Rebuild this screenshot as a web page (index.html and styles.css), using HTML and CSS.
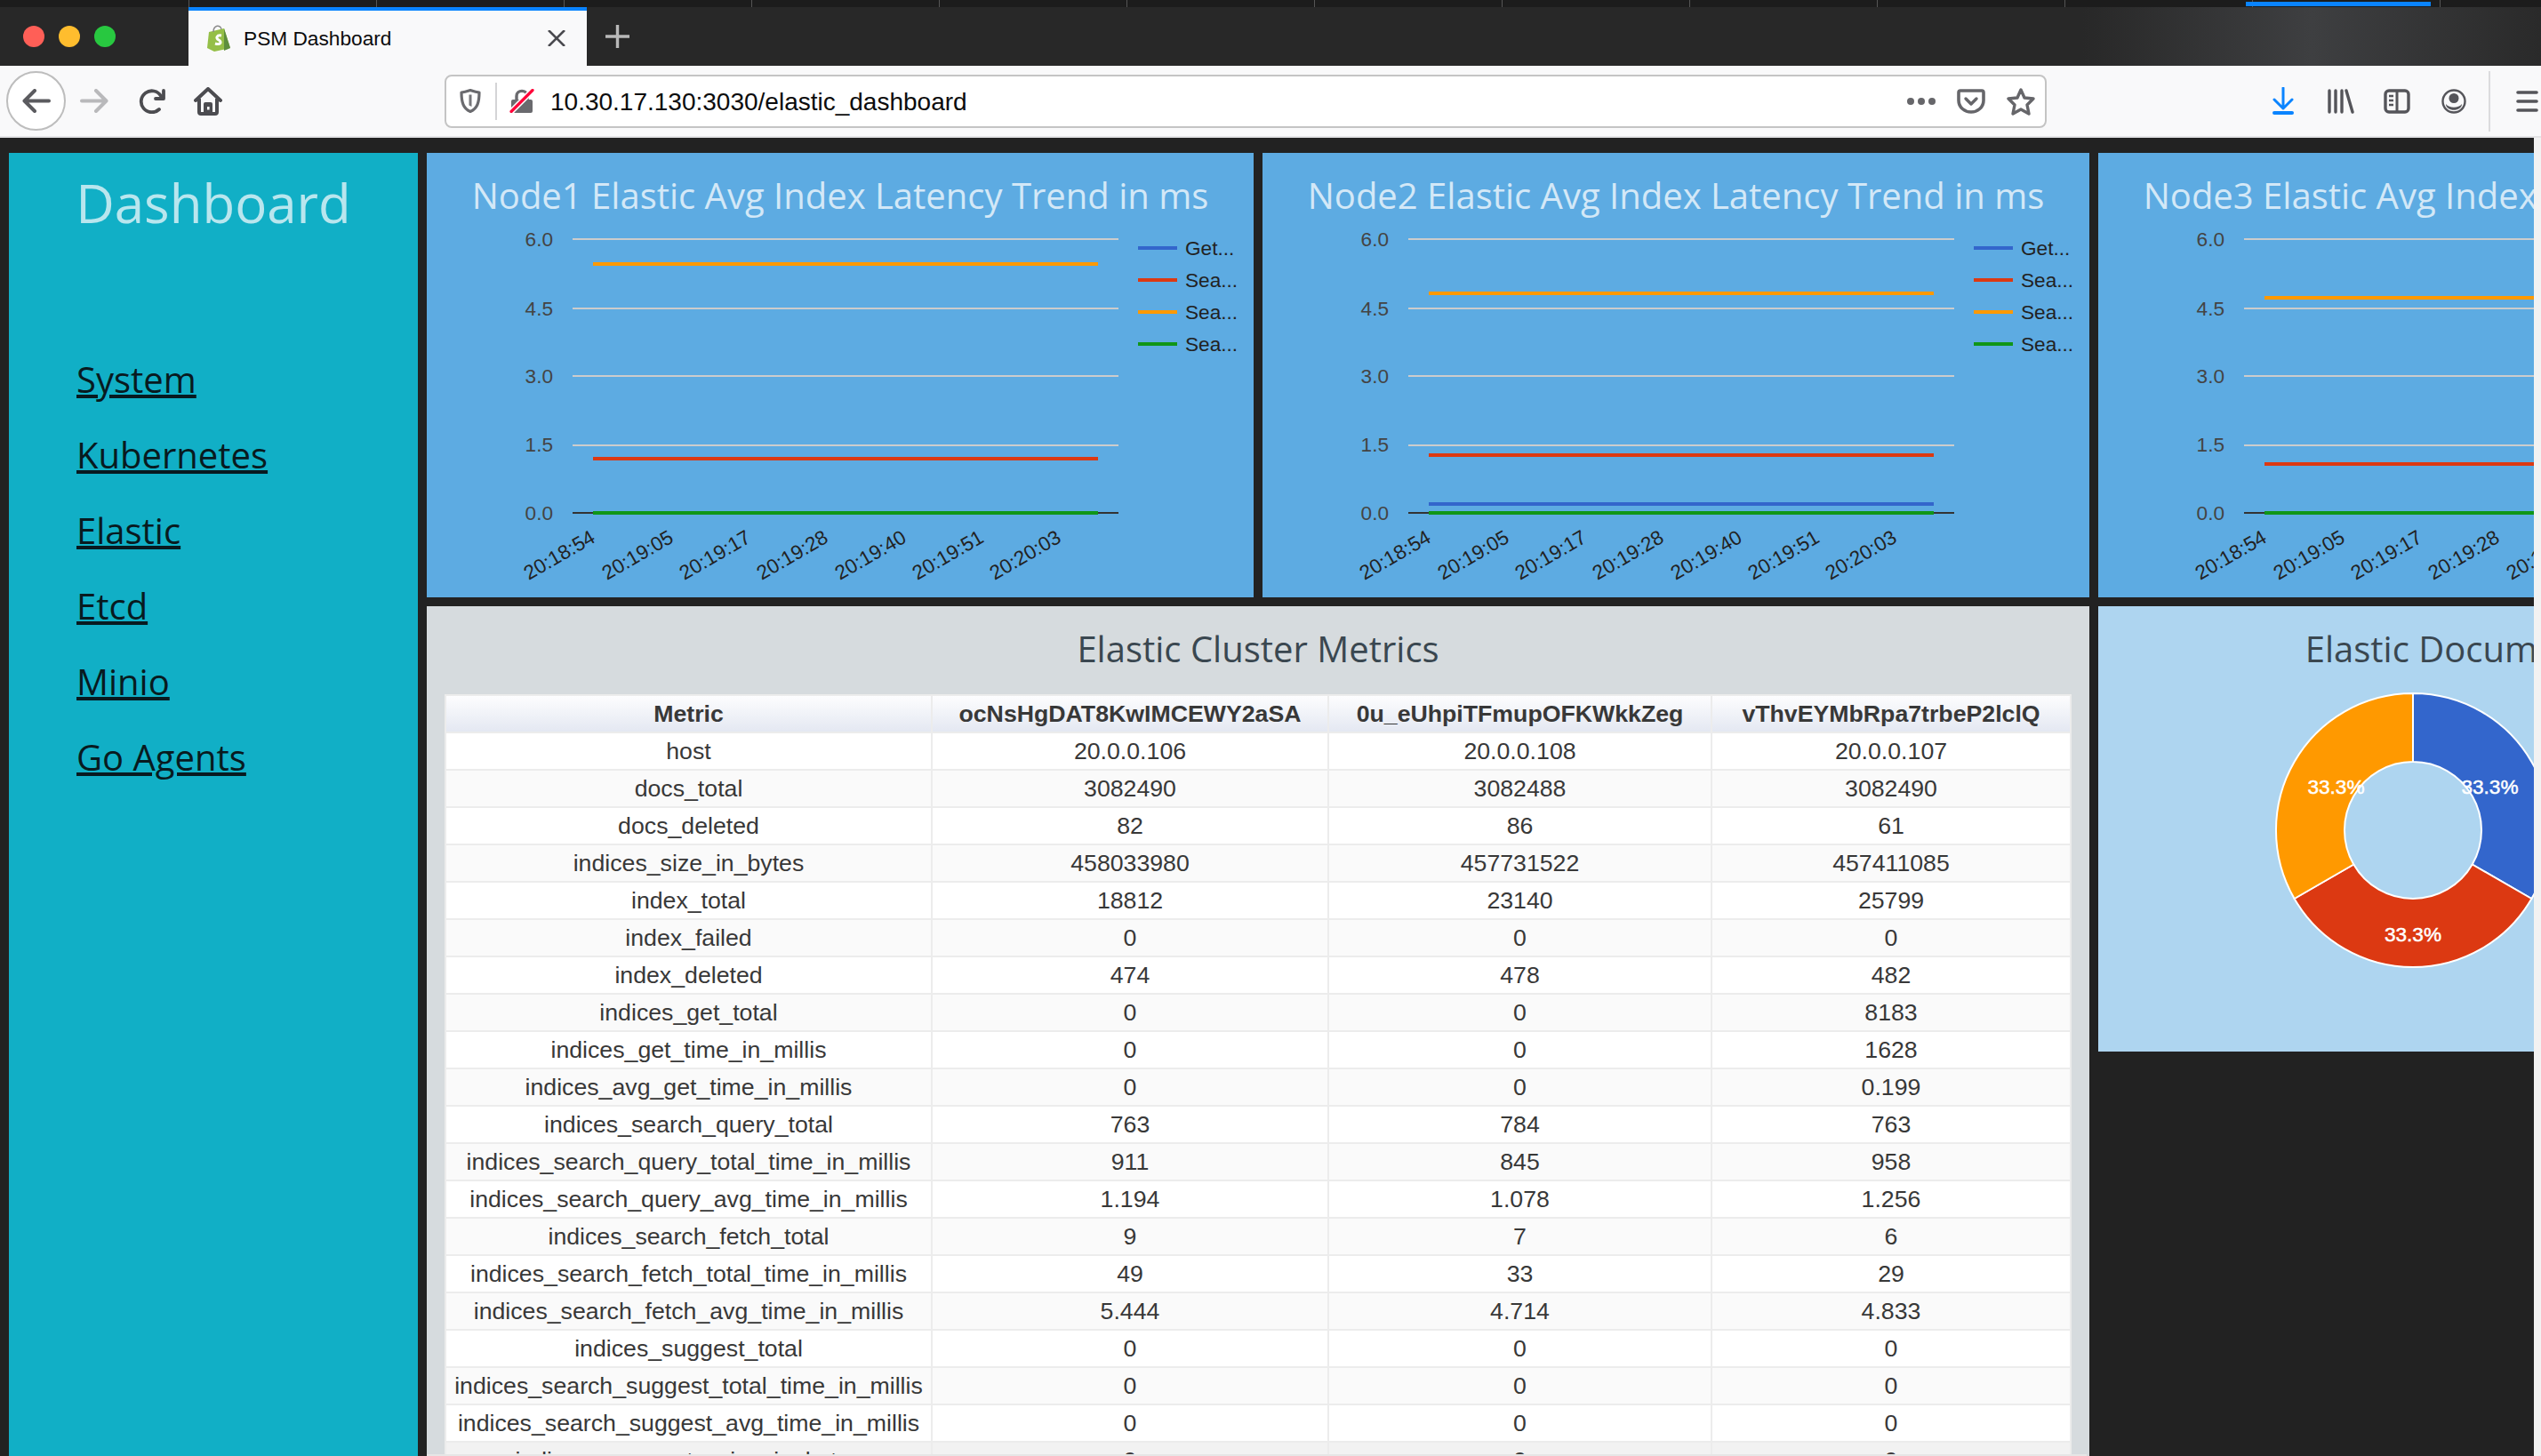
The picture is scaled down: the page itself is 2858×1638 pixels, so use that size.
FILE: index.html
```html
<!DOCTYPE html>
<html lang="en">

<head>
    <meta charset="UTF-8">
    <title>PSM Dashboard</title>
    <link rel="stylesheet" href="styles.css">
</head>

<body>
    <div class="window-strip"><span class="other-tab"></span></div>
    <div class="tabbar">
        <div class="traffic">
            <span class="light red"></span>
            <span class="light yellow"></span>
            <span class="light green"></span>
        </div>
        <div class="tab">
            <svg class="favicon" viewBox="0 0 28 30" width="28" height="30">
                <path d="M3 8 L20 4 L27 26 L9 30 L1 26 Z" fill="#95bf47" />
                <path d="M20 4 L27 26 L20 29 Z" fill="#5e8e3e" />
                <path d="M8 8 C8 0 16 -1 17 5" fill="none" stroke="#8a8a8a" stroke-width="1.5" />
                <path d="M17 12 C12 11 10 15 14 17 C18 19 16 23 10 21" fill="none" stroke="#fff" stroke-width="3" />
            </svg>
            <span class="tab-title">PSM Dashboard</span>
            <svg class="tab-close" viewBox="0 0 20 18" width="20" height="18">
                <path d="M1 0 L19 18 M19 0 L1 18" stroke="#4a4a4f" stroke-width="2.6" />
            </svg>
        </div>
        <svg class="newtab" viewBox="0 0 27 26" width="27" height="26">
            <path d="M13.5 0 V26 M0 13 H27" stroke="#b8b8b8" stroke-width="3.4" />
        </svg>
        <div class="tab-glow"></div>
    </div>

    <div class="toolbar">
        <div class="back-btn">
            <svg viewBox="0 0 32 27" width="32" height="27">
                <path d="M30 13.5 H3 M14 2 L2.5 13.5 L14 25" fill="none" stroke="#5b5b5f" stroke-width="4" stroke-linecap="round" stroke-linejoin="round" />
            </svg>
        </div>
        <svg class="tool-icon forward" viewBox="0 0 32 27" width="32" height="27">
            <path d="M2 13.5 H29 M18 2 L29.5 13.5 L18 25" fill="none" stroke="#b9b9bb" stroke-width="4" stroke-linecap="round" stroke-linejoin="round" />
        </svg>
        <svg class="tool-icon reload" viewBox="0 0 30 28" width="30" height="28">
            <path d="M23 23 A12 12 0 1 1 25 8" fill="none" stroke="#4c4c50" stroke-width="3.8" stroke-linecap="round" />
            <path d="M28 2 V11 H19" fill="none" stroke="#4c4c50" stroke-width="3.8" stroke-linecap="round" stroke-linejoin="round" />
        </svg>
        <svg class="tool-icon home" viewBox="0 0 32 32" width="32" height="32">
            <path d="M2 15 L16 2 L30 15" fill="none" stroke="#4c4c50" stroke-width="4" stroke-linecap="round" stroke-linejoin="round" />
            <path d="M6 13 V28 Q6 30 8 30 H24 Q26 30 26 28 V13" fill="none" stroke="#4c4c50" stroke-width="4" />
            <path d="M11 30 V19 Q11 17 13 17 H19 Q21 17 21 19 V30 Z" fill="#4c4c50" />
            <rect x="15" y="22" width="2.6" height="3.5" fill="#f9f9fa" />
        </svg>

        <div class="urlbar">
            <svg class="shield" viewBox="0 0 24 27" width="24" height="27">
                <path d="M2 4 C7 3.5 9 2.5 12 1.5 C15 2.5 17 3.5 22 4 C22 15 20 22 12 25.5 C4 22 2 15 2 4 Z" fill="#fff" stroke="#6a6a6e" stroke-width="3.2" stroke-linejoin="round" />
                <path d="M10.5 6.5 H13.5 V20 L10.5 18.5 Z" fill="#77777b" />
            </svg>
            <span class="url-sep"></span>
            <svg class="lock" viewBox="0 0 28 27" width="28" height="27">
                <path d="M8 13 V8 C8 0.5 20 0.5 20 8 V13" fill="none" stroke="#6a6a6e" stroke-width="3.4" />
                <rect x="2" y="12" width="24" height="15" rx="2" fill="#6a6a6e" />
                <path d="M2 25.5 L26 1.5" stroke="#fff" stroke-width="6.5" />
                <path d="M2 25.5 L26 1.5" stroke="#ff0039" stroke-width="3.2" stroke-linecap="round" />
            </svg>
            <span class="url-text">10.30.17.130:3030/elastic_dashboard</span>
            <span class="url-dots"><i></i><i></i><i></i></span>
            <svg class="pocket" viewBox="0 0 32 28" width="32" height="28">
                <path d="M2 4 Q2 2 4 2 H28 Q30 2 30 4 V13 C30 21 23 26 16 26 C9 26 2 21 2 13 Z" fill="none" stroke="#66666a" stroke-width="3.6" stroke-linejoin="round" />
                <path d="M10 11 L16 17 L22 11" fill="none" stroke="#66666a" stroke-width="3.4" stroke-linecap="round" stroke-linejoin="round" />
            </svg>
            <svg class="star" viewBox="0 0 32 32" width="32" height="32">
                <path d="M16 3 L20 12 L30 13 L23 20 L25 30 L16 25 L7 30 L9 20 L2 13 L12 12 Z" fill="none" stroke="#66666a" stroke-width="3.4" stroke-linejoin="round" />
            </svg>
        </div>

        <svg class="tool-download" viewBox="0 0 24 31" width="24" height="31">
            <path d="M12 1 V24 M2 14 L12 24 L22 14" fill="none" stroke="#0a84ff" stroke-width="3" stroke-linecap="round" stroke-linejoin="round" />
            <path d="M2 29 H22" stroke="#0a84ff" stroke-width="4" stroke-linecap="round" />
        </svg>
        <svg class="tool-library" viewBox="0 0 30 28" width="30" height="28">
            <path d="M2 2 V26 M9 2 V26 M16 2 V26 M21 2 L28 26" fill="none" stroke="#55555a" stroke-width="3.4" stroke-linecap="round" />
        </svg>
        <svg class="tool-sidebar" viewBox="0 0 30 28" width="30" height="28">
            <rect x="2" y="2" width="26" height="24" rx="4" fill="none" stroke="#55555a" stroke-width="3.4" />
            <path d="M15 2 V26" stroke="#55555a" stroke-width="3" />
            <path d="M6 8 H11 M6 13 H11 M6 18 H11" stroke="#55555a" stroke-width="2.4" />
        </svg>
        <svg class="tool-account" viewBox="0 0 28 28" width="28" height="28">
            <circle cx="14" cy="14" r="12.5" fill="none" stroke="#55555a" stroke-width="2.4" />
            <circle cx="14" cy="10.5" r="5.5" fill="#55555a" />
            <path d="M5 17 C9 22 19 22 23 17 C23 26 5 26 5 17 Z" fill="#55555a" />
        </svg>
        <span class="tool-sep"></span>
        <svg class="hamburger" viewBox="0 0 25 24" width="25" height="24">
            <path d="M2 2 H23 M2 12 H23 M2 22 H23" stroke="#55555a" stroke-width="3.6" stroke-linecap="round" />
        </svg>
    </div>

    <div class="viewport">
        <div class="dashboard">
            <nav class="sidenav">
                <h1 class="brand">Dashboard</h1>
                <ul class="nav-links">
                    <li><a href="#">System</a></li>
                    <li><a href="#">Kubernetes</a></li>
                    <li><a href="#">Elastic</a></li>
                    <li><a href="#">Etcd</a></li>
                    <li><a href="#">Minio</a></li>
                    <li><a href="#">Go Agents</a></li>
                </ul>
            </nav>

            <section class="panel chart-panel">
                <h2 class="panel-title light-title">Node1 Elastic Avg Index Latency Trend in ms</h2>
                <svg class="line-chart" viewBox="0 17 930 424" width="930" height="424">
                    <use href="#chart-axes" />
                    <path class="series orange" d="M187 66 H755" />
                    <path class="series red" d="M187 285 H755" />
                    <path class="series blue" d="M187 346 H755" />
                    <path class="series green" d="M187 346 H755" />
                </svg>
            </section>

            <section class="panel chart-panel">
                <h2 class="panel-title light-title">Node2 Elastic Avg Index Latency Trend in ms</h2>
                <svg class="line-chart" viewBox="0 17 930 424" width="930" height="424">
                    <use href="#chart-axes" />
                    <path class="series orange" d="M187 99 H755" />
                    <path class="series red" d="M187 281 H755" />
                    <path class="series blue" d="M187 336 H755" />
                    <path class="series green" d="M187 346 H755" />
                </svg>
            </section>

            <section class="panel chart-panel">
                <h2 class="panel-title light-title">Node3 Elastic Avg Index Latency Trend in ms</h2>
                <svg class="line-chart" viewBox="0 17 930 424" width="930" height="424">
                    <use href="#chart-axes" />
                    <path class="series orange" d="M187 104 H755" />
                    <path class="series red" d="M187 291 H755" />
                    <path class="series blue" d="M187 346 H755" />
                    <path class="series green" d="M187 346 H755" />
                </svg>
            </section>

            <section class="panel metrics-panel">
                <h2 class="panel-title dark-title">Elastic Cluster Metrics</h2>
                <table class="metrics">
                    <thead>
                        <tr>
                            <th class="col-metric">Metric</th>
                            <th class="col-a">ocNsHgDAT8KwIMCEWY2aSA</th>
                            <th class="col-b">0u_eUhpiTFmupOFKWkkZeg</th>
                            <th class="col-c">vThvEYMbRpa7trbeP2lclQ</th>
                        </tr>
                    </thead>
                    <tbody>
                        <tr><td>host</td><td>20.0.0.106</td><td>20.0.0.108</td><td>20.0.0.107</td></tr>
                        <tr><td>docs_total</td><td>3082490</td><td>3082488</td><td>3082490</td></tr>
                        <tr><td>docs_deleted</td><td>82</td><td>86</td><td>61</td></tr>
                        <tr><td>indices_size_in_bytes</td><td>458033980</td><td>457731522</td><td>457411085</td></tr>
                        <tr><td>index_total</td><td>18812</td><td>23140</td><td>25799</td></tr>
                        <tr><td>index_failed</td><td>0</td><td>0</td><td>0</td></tr>
                        <tr><td>index_deleted</td><td>474</td><td>478</td><td>482</td></tr>
                        <tr><td>indices_get_total</td><td>0</td><td>0</td><td>8183</td></tr>
                        <tr><td>indices_get_time_in_millis</td><td>0</td><td>0</td><td>1628</td></tr>
                        <tr><td>indices_avg_get_time_in_millis</td><td>0</td><td>0</td><td>0.199</td></tr>
                        <tr><td>indices_search_query_total</td><td>763</td><td>784</td><td>763</td></tr>
                        <tr><td>indices_search_query_total_time_in_millis</td><td>911</td><td>845</td><td>958</td></tr>
                        <tr><td>indices_search_query_avg_time_in_millis</td><td>1.194</td><td>1.078</td><td>1.256</td></tr>
                        <tr><td>indices_search_fetch_total</td><td>9</td><td>7</td><td>6</td></tr>
                        <tr><td>indices_search_fetch_total_time_in_millis</td><td>49</td><td>33</td><td>29</td></tr>
                        <tr><td>indices_search_fetch_avg_time_in_millis</td><td>5.444</td><td>4.714</td><td>4.833</td></tr>
                        <tr><td>indices_suggest_total</td><td>0</td><td>0</td><td>0</td></tr>
                        <tr><td>indices_search_suggest_total_time_in_millis</td><td>0</td><td>0</td><td>0</td></tr>
                        <tr><td>indices_search_suggest_avg_time_in_millis</td><td>0</td><td>0</td><td>0</td></tr>
                        <tr><td>indices_segments_size_in_bytes</td><td>0</td><td>0</td><td>0</td></tr>
                    </tbody>
                </table>
            </section>

            <section class="panel docs-panel">
                <h2 class="panel-title dark-title">Elastic Document Counts</h2>
                <svg class="donut" viewBox="0 70 500 420" width="500" height="420">
                    <path class="slice-blue" d="M354 92 A154 154 0 0 1 487.4 323 L420.7 284.5 A77 77 0 0 0 354 169 Z" />
                    <path class="slice-red" d="M487.4 323 A154 154 0 0 1 220.6 323 L287.3 284.5 A77 77 0 0 0 420.7 284.5 Z" />
                    <path class="slice-orange" d="M220.6 323 A154 154 0 0 1 354 92 L354 169 A77 77 0 0 0 287.3 284.5 Z" />
                    <text class="donut-label" x="267.5" y="205">33.3%</text>
                    <text class="donut-label" x="440.5" y="205">33.3%</text>
                    <text class="donut-label" x="354" y="371">33.3%</text>
                </svg>
            </section>
        </div>
        <div class="scroll-strip"></div>
    </div>

    <svg class="defs" width="0" height="0">
        <defs>
            <g id="chart-axes">
                <path class="grid" d="M164 38 H778 M164 116 H778 M164 192 H778 M164 270 H778" />
                <path class="baseline" d="M164 346 H778" />
                <text class="axis-y" x="142" y="46">6.0</text>
                <text class="axis-y" x="142" y="124">4.5</text>
                <text class="axis-y" x="142" y="200">3.0</text>
                <text class="axis-y" x="142" y="277">1.5</text>
                <text class="axis-y" x="142" y="354">0.0</text>
                <text class="axis-x" transform="translate(191 378) rotate(-30)">20:18:54</text>
                <text class="axis-x" transform="translate(279 378) rotate(-30)">20:19:05</text>
                <text class="axis-x" transform="translate(366 378) rotate(-30)">20:19:17</text>
                <text class="axis-x" transform="translate(453 378) rotate(-30)">20:19:28</text>
                <text class="axis-x" transform="translate(541 378) rotate(-30)">20:19:40</text>
                <text class="axis-x" transform="translate(628 378) rotate(-30)">20:19:51</text>
                <text class="axis-x" transform="translate(715 378) rotate(-30)">20:20:03</text>
                <path class="legend-blue" d="M800 48 H844" />
                <path class="legend-red" d="M800 84 H844" />
                <path class="legend-orange" d="M800 120 H844" />
                <path class="legend-green" d="M800 156 H844" />
                <text class="legend-text" x="853" y="56">Get...</text>
                <text class="legend-text" x="853" y="92">Sea...</text>
                <text class="legend-text" x="853" y="128">Sea...</text>
                <text class="legend-text" x="853" y="164">Sea...</text>
            </g>
        </defs>
    </svg>
</body>

</html>
```

FILE: styles.css
```css
html,
body {
    margin: 0;
    padding: 0;
    height: 100%;
    overflow: hidden;
}

body {
    font-family: "Liberation Sans", Arial, sans-serif;
    background-color: #222;
    display: flex;
    flex-direction: column;
}

.defs {
    position: absolute;
}

/* browser chrome */
.window-strip {
    height: 8px;
    flex: none;
    background-color: #1c1c1c;
    background-image: repeating-linear-gradient(to right, transparent 0, transparent 210px, #555 210px, #555 211px);
    background-position: 2px 0;
}

.other-tab {
    display: block;
    width: 208px;
    height: 5px;
    margin: 2px 0 0 2526px;
    background-color: #0a84ff;
}

.tabbar {
    height: 66px;
    flex: none;
    display: flex;
    align-items: center;
    background-color: #282828;
}

.traffic {
    width: 212px;
    box-sizing: border-box;
    padding-left: 26px;
    display: flex;
    align-items: center;
    gap: 16px;
    flex: none;
}

.light {
    width: 24px;
    height: 24px;
    border-radius: 50%;
}

.light.red {
    background-color: #ff5f57;
}

.light.yellow {
    background-color: #ffbd2e;
}

.light.green {
    background-color: #28c840;
}

.tab {
    width: 448px;
    height: 66px;
    box-sizing: border-box;
    flex: none;
    display: flex;
    align-items: center;
    background-color: #f9f9fa;
    border-top: 4px solid #0a84ff;
    padding: 0 24px 0 20px;
}

.favicon {
    flex: none;
}

.tab-title {
    margin-left: 14px;
    font-size: 22.7px;
    color: #0c0c0d;
    flex: 1;
}

.newtab {
    flex: none;
    margin-left: 21px;
}

.tab-glow {
    flex: 1;
    align-self: stretch;
    background: linear-gradient(to right, #282828 0, #282828 76%, #3e3f41 88%, #2a2a2a 100%);
}

.toolbar {
    height: 81px;
    flex: none;
    box-sizing: border-box;
    display: flex;
    align-items: center;
    background-color: #f9f9fa;
    border-bottom: 2px solid #e4e4e6;
    padding-left: 7px;
}

.back-btn {
    width: 67px;
    height: 67px;
    box-sizing: border-box;
    border: 2px solid #bdbdbd;
    border-radius: 50%;
    background-color: #fff;
    display: flex;
    align-items: center;
    justify-content: center;
    flex: none;
}

.tool-icon {
    flex: none;
}

.tool-icon.forward {
    margin-left: 16px;
}

.tool-icon.reload {
    margin-left: 34px;
}

.tool-icon.home {
    margin-left: 32px;
}

.urlbar {
    width: 1802px;
    height: 60px;
    margin-left: 250px;
    box-sizing: border-box;
    border: 2px solid #c4c4c4;
    border-radius: 8px;
    background-color: #fff;
    display: flex;
    align-items: center;
    flex: none;
    padding: 0 11px 0 15px;
}

.shield,
.lock,
.pocket,
.star {
    flex: none;
}

.url-sep {
    width: 2px;
    height: 42px;
    background-color: #d4d4d6;
    margin: 0 14px 0 16px;
    flex: none;
}

.url-text {
    margin-left: 18px;
    padding-top: 2px;
    font-size: 28px;
    color: #0c0c0d;
    flex: 1;
}

.url-dots {
    display: flex;
    gap: 4px;
}

.url-dots i {
    width: 8px;
    height: 8px;
    border-radius: 50%;
    background-color: #66666a;
}

.pocket {
    margin-left: 24px;
}

.star {
    margin-left: 24px;
}

.tool-download {
    flex: none;
    margin-left: 254px;
}

.tool-library {
    flex: none;
    margin-left: 38px;
}

.tool-sidebar {
    flex: none;
    margin-left: 33px;
}

.tool-account {
    flex: none;
    margin-left: 35px;
}

.tool-sep {
    width: 2px;
    height: 68px;
    flex: none;
    margin-left: 25px;
    background-color: #dcdcde;
}

.hamburger {
    flex: none;
    margin-left: 29px;
}

/* page */
.viewport {
    flex: 1;
    min-height: 0;
    display: flex;
    overflow: hidden;
}

.dashboard {
    flex: 1;
    min-width: 0;
    overflow: hidden;
    display: grid;
    grid-template-columns: 460px 930px 930px 930px;
    grid-template-rows: 500px 1fr;
    gap: 10px;
    padding: 17px 0 0 10px;
    background-color: #222;
}

.scroll-strip {
    width: 8px;
    flex: none;
    background-color: #f2f2f2;
}

.sidenav {
    grid-row: 1 / 3;
    background-color: #11afc6;
}

.brand {
    margin: 0;
    padding-top: 15px;
    text-align: center;
    font-family: "Open Sans", sans-serif;
    font-weight: 400;
    font-size: 60px;
    color: #b9e6ee;
}

.nav-links {
    list-style: none;
    margin: 0;
    padding: 115px 0 0 76px;
}

.nav-links li {
    height: 85px;
    font-family: "Open Sans", sans-serif;
    font-size: 40px;
    line-height: 85px;
}

.nav-links a {
    color: #081a20;
}

.panel {
    overflow: hidden;
}

.panel-title {
    margin: 0;
    text-align: center;
    font-family: "Open Sans", sans-serif;
    font-weight: 400;
    font-size: 40px;
    line-height: 56px;
    padding-top: 20px;
}

.light-title {
    color: #d3e8f7;
}

.dark-title {
    color: #3a4750;
}

.chart-panel {
    background-color: #5dabe2;
}

.metrics-panel {
    grid-column: 2 / 4;
    background-color: #d6dbde;
    position: relative;
}

/* thin line along the window bottom */
.metrics-panel::after {
    content: "";
    position: absolute;
    left: 0;
    right: 3px;
    bottom: 0;
    height: 2px;
    background-color: #e6e6e6;
}

.docs-panel {
    background-color: #aed5f0;
    height: 501px;
}

.line-chart,
.donut {
    display: block;
}

.grid {
    stroke: #ccc;
    stroke-width: 2;
    fill: none;
}

.baseline {
    stroke: #333;
    stroke-width: 2;
    fill: none;
}

.series {
    stroke-width: 4;
    fill: none;
}

.series.orange,
.legend-orange {
    stroke: #f90;
}

.series.red,
.legend-red {
    stroke: #dc3912;
}

.series.blue,
.legend-blue {
    stroke: #36c;
}

.series.green,
.legend-green {
    stroke: #109618;
}

.legend-orange,
.legend-red,
.legend-blue,
.legend-green {
    stroke-width: 4;
}

.axis-y {
    font-size: 22.6px;
    fill: #444;
    text-anchor: end;
}

.axis-x {
    font-size: 22.6px;
    fill: #222;
    text-anchor: end;
}

.legend-text {
    font-size: 22.6px;
    fill: #222;
}

.slice-blue,
.slice-red,
.slice-orange {
    stroke: #fff;
    stroke-width: 2;
}

.slice-blue {
    fill: #36c;
}

.slice-red {
    fill: #dc3912;
}

.slice-orange {
    fill: #f90;
}

.donut-label {
    font-size: 22.6px;
    fill: #fff;
    stroke: #fff;
    stroke-width: 0.5;
    text-anchor: middle;
}

/* table */
.metrics {
    width: 1828px;
    margin: 23px 0 0 20px;
    border-collapse: collapse;
    table-layout: fixed;
    font-size: 26.7px;
    color: #383838;
    text-align: center;
}

.metrics th,
.metrics td {
    height: 42px;
    padding: 0;
    border: 2px solid #ececec;
    box-sizing: border-box;
}

.metrics th {
    background: linear-gradient(to bottom, #fdfdfe, #e4e8f2);
}

.metrics tbody tr {
    background-color: #fff;
}

.metrics tbody tr:nth-child(even) {
    background-color: #fafafa;
}

.metrics tbody tr:last-child {
    background-color: #f2f2f2;
}

.col-metric {
    width: 547px;
}

.col-a {
    width: 446px;
}

.col-b {
    width: 431px;
}

.col-c {
    width: 404px;
}
```
